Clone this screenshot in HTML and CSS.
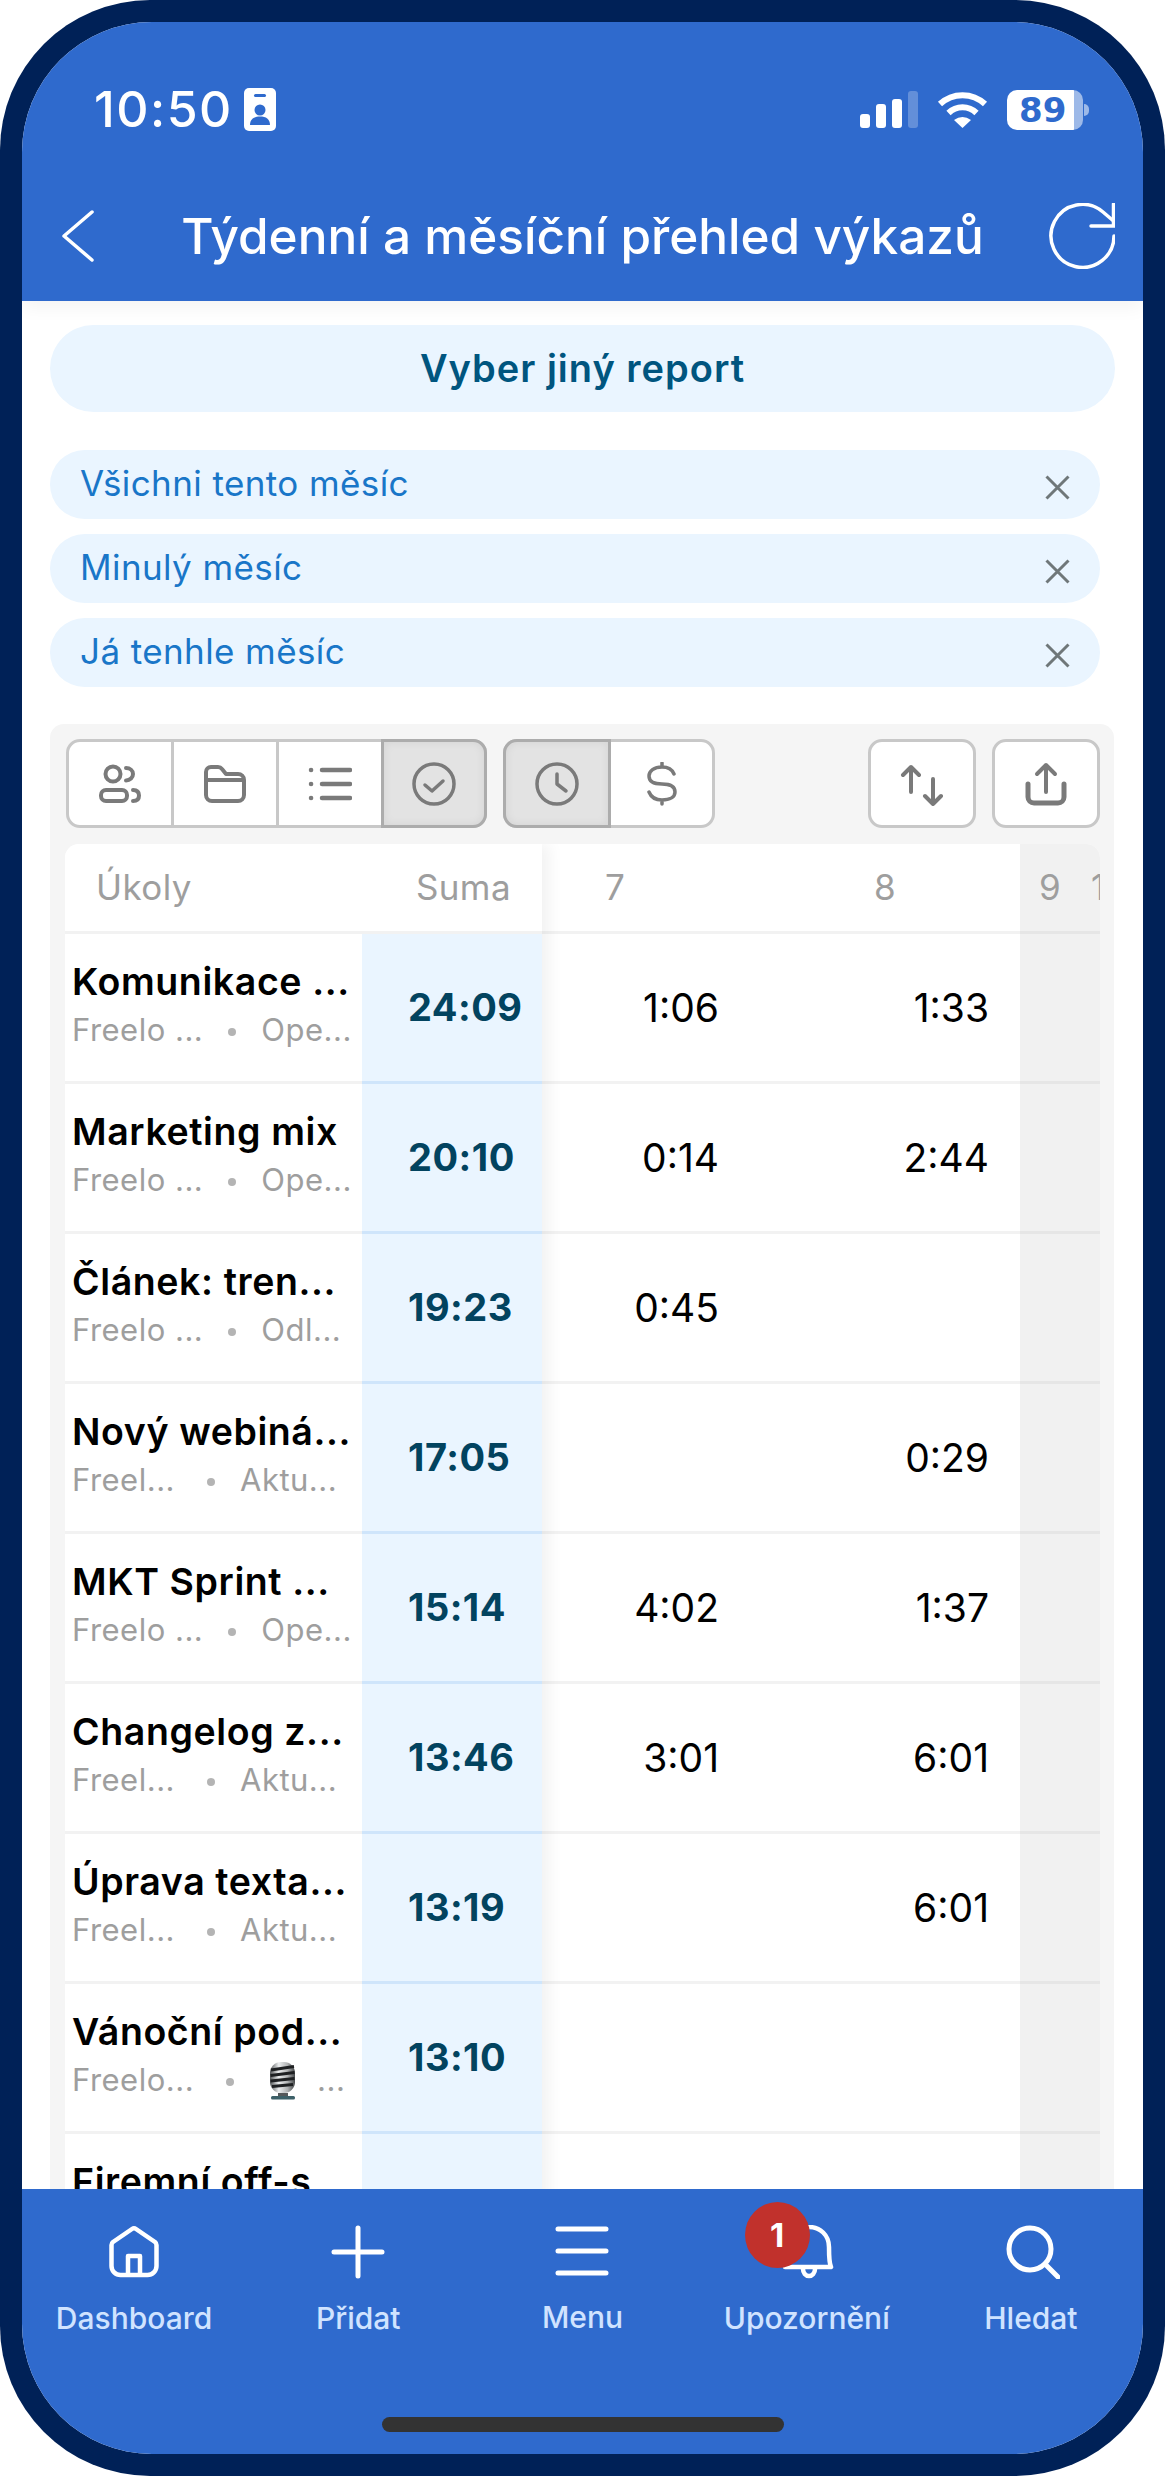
FILE: index.html
```html
<!DOCTYPE html>
<html lang="cs">
<head>
<meta charset="utf-8">
<title>Týdenní a měsíční přehled výkazů</title>
<link rel="stylesheet" href="styles.css">
</head>
<body>
<div class="device">
  <div class="screen">
    <header class="header">
      <div class="status">
        <div class="status-left">
          <span class="time">10:50</span>
          <svg class="ic-card" width="32" height="43" viewBox="0 0 32 43"><rect width="32" height="43" rx="5" fill="#fff"/><rect x="10" y="6" width="12" height="3" rx="1.5" fill="#2f6acd"/><circle cx="16" cy="22" r="5.5" fill="#2f6acd"/><path d="M6 37c0-6 4-8.500 10-8.500s10 2.500 10 8.500z" fill="#2f6acd"/></svg>
        </div>
        <div class="status-right">
          <svg width="58" height="37" viewBox="0 0 58 37"><rect y="23" width="10" height="14" rx="3" fill="#fff"/><rect x="16" y="13" width="10" height="24" rx="3" fill="#fff"/><rect x="32" y="8" width="10" height="29" rx="3" fill="#fff"/><rect x="48" width="10" height="37" rx="3" fill="#fff" fill-opacity=".25"/></svg>
          <svg width="51" height="37" viewBox="0 0 51 37" fill="none"><path d="M3 13A33 33 0 0 1 48 13" stroke="#fff" stroke-width="6"/><path d="M11.500 22A20 20 0 0 1 39.500 22" stroke="#fff" stroke-width="6"/><path d="M17 29Q25.500 23 34 29L25.500 37Z" fill="#fff"/></svg>
          <div class="battery"><span class="battery-level">89</span><span class="battery-nub"></span></div>
        </div>
      </div>
      <nav class="nav">
        <svg class="ic-back" width="32" height="52" viewBox="0 0 32 52" fill="none"><path d="M30 2 2 26l28 24" stroke="#fff" stroke-width="3.500" stroke-linecap="round" stroke-linejoin="round"/></svg>
        <h1 class="title">Týdenní a měsíční přehled výkazů</h1>
        <svg class="ic-refresh" width="66" height="66" viewBox="0 0 66 66" fill="none"><path d="M65 33A31.500 31.500 0 1 1 54 9L64.500 18" stroke="#fff" stroke-width="3.500" stroke-linecap="round"/><path d="M64.500 1V23H42" stroke="#fff" stroke-width="3.500" stroke-linecap="round"/></svg>
      </nav>
    </header>

    <main class="content">
      <button class="report-btn">Vyber jiný report</button>
      <ul class="chips">
        <li class="chip"><span>Všichni tento měsíc</span><svg width="25" height="25" viewBox="0 0 25 25"><path d="M1.500 1.500l22 22M23.500 1.500l-22 22" stroke="#6f7779" stroke-width="3"/></svg></li>
        <li class="chip"><span>Minulý měsíc</span><svg width="25" height="25" viewBox="0 0 25 25"><path d="M1.500 1.500l22 22M23.500 1.500l-22 22" stroke="#6f7779" stroke-width="3"/></svg></li>
        <li class="chip"><span>Já tenhle měsíc</span><svg width="25" height="25" viewBox="0 0 25 25"><path d="M1.500 1.500l22 22M23.500 1.500l-22 22" stroke="#6f7779" stroke-width="3"/></svg></li>
      </ul>

      <section class="panel">
        <div class="toolbar">
          <div class="seg">
            <div class="seg-item"><svg width="44" height="40" viewBox="0 0 44 40" fill="none" stroke="#7a7a7a" stroke-width="4" stroke-linecap="round"><circle cx="15" cy="10" r="7.500"/><rect x="3" y="26" width="26" height="11" rx="5"/><path d="M28 4c4 0 7 2.500 7 6s-3 6.500-7 6.500M35 26c4 0 6 2 6 5.500s-2 5.500-6 5.500"/></svg></div>
            <div class="seg-item"><svg width="44" height="40" viewBox="0 0 44 40" fill="none" stroke="#7a7a7a" stroke-width="4" stroke-linejoin="round"><path d="M3 31V8a5 5 0 0 1 5-5h7a5 5 0 0 1 4 2l4 5h12a6 6 0 0 1 6 6v15a6 6 0 0 1-6 6H9a6 6 0 0 1-6-6zM3 16h38"/></svg></div>
            <div class="seg-item"><svg width="44" height="36" viewBox="0 0 44 36" fill="none" stroke="#7a7a7a" stroke-width="4.500" stroke-linecap="round"><path d="M3 4h.1M3 18h.1M3 32h.1M14 4h28M14 18h28M14 32h28"/></svg></div>
            <div class="seg-item seg-active seg-end"><svg width="44" height="44" viewBox="0 0 44 44" fill="none" stroke="#7a7a7a" stroke-width="3.500" stroke-linecap="round" stroke-linejoin="round"><circle cx="22" cy="22" r="20"/><path d="M13 23l7 6 11-10"/></svg></div>
          </div>
          <div class="seg">
            <div class="seg-item seg-active seg-start"><svg width="44" height="44" viewBox="0 0 44 44" fill="none" stroke="#7a7a7a" stroke-width="3.500" stroke-linecap="round" stroke-linejoin="round"><circle cx="22" cy="22" r="20"/><path d="M22 12v10l9 7"/></svg></div>
            <div class="seg-item"><svg width="44" height="44" viewBox="0 0 44 44" fill="none" stroke="#7a7a7a" stroke-width="3.500" stroke-linecap="round"><path d="M34 12c-2-5-6-7-12-7-8 0-13 4-13 9 0 6 5 8 13 8s13 2 13 8c0 5-5 8-13 8-7 0-11-3-13-8M22 1v4M22 38v4"/></svg></div>
          </div>
          <div class="tool-spacer"></div>
          <div class="tool-btn"><svg width="44" height="44" viewBox="0 0 44 44" fill="none" stroke="#7a7a7a" stroke-width="4" stroke-linecap="round" stroke-linejoin="round"><path d="M11 30V5M3 13l8-8 8 8M33 17v25M25 34l8 8 8-8"/></svg></div>
          <div class="tool-btn"><svg width="44" height="44" viewBox="0 0 44 44" fill="none" stroke="#7a7a7a" stroke-width="4" stroke-linecap="round" stroke-linejoin="round"><path d="M22 30V3M13 12l9-9 9 9"/><path d="M4 22v13a6 6 0 0 0 6 6h24a6 6 0 0 0 6-6V22" stroke-width="5"/></svg></div>
        </div>

        <div class="table">
          <div class="frozen">
            <div class="f-row f-head"><div class="head-task">Úkoly</div><div class="head-sum">Suma</div></div>
            <div class="f-row"><div class="task"><div class="task-name">Komunikace ...</div><div class="task-sub"><span>Freelo ...</span><i class="dot"></i><span>Ope...</span></div></div><div class="sum">24:09</div></div>
            <div class="f-row"><div class="task"><div class="task-name">Marketing mix</div><div class="task-sub"><span>Freelo ...</span><i class="dot"></i><span>Ope...</span></div></div><div class="sum">20:10</div></div>
            <div class="f-row"><div class="task"><div class="task-name">Článek: tren...</div><div class="task-sub"><span>Freelo ...</span><i class="dot"></i><span>Odl...</span></div></div><div class="sum">19:23</div></div>
            <div class="f-row"><div class="task"><div class="task-name">Nový webiná...</div><div class="task-sub"><span class="name-short">Freel...</span><i class="dot"></i><span>Aktu...</span></div></div><div class="sum">17:05</div></div>
            <div class="f-row"><div class="task"><div class="task-name">MKT Sprint ...</div><div class="task-sub"><span>Freelo ...</span><i class="dot"></i><span>Ope...</span></div></div><div class="sum">15:14</div></div>
            <div class="f-row"><div class="task"><div class="task-name">Changelog z...</div><div class="task-sub"><span class="name-short">Freel...</span><i class="dot"></i><span>Aktu...</span></div></div><div class="sum">13:46</div></div>
            <div class="f-row"><div class="task"><div class="task-name">Úprava texta...</div><div class="task-sub"><span class="name-short">Freel...</span><i class="dot"></i><span>Aktu...</span></div></div><div class="sum">13:19</div></div>
            <div class="f-row"><div class="task"><div class="task-name">Vánoční pod...</div><div class="task-sub"><span class="name-short">Freelo...</span><i class="dot"></i><svg class="mic" width="27" height="38" viewBox="0 0 27 38" role="img" aria-label="🎙"><defs><linearGradient id="micMetal" x1="0" x2="1" y1="0" y2="0"><stop offset="0" stop-color="#55585a"/><stop offset=".35" stop-color="#eceeef"/><stop offset=".7" stop-color="#b0b2b3"/><stop offset="1" stop-color="#45484a"/></linearGradient></defs><rect x="1" y="0" width="25" height="31" rx="11" fill="url(#micMetal)"/><path d="M2 8 25 4.500M1.500 13.500 25.500 10.500M1.500 19 25.500 16.500M3 24.500 24 22.500" stroke="#1e2022" stroke-width="3"/><path d="M9 31h10v3H9z" fill="#55585a"/><rect x="2" y="34" width="24" height="3.500" rx="1.500" fill="#3d6068"/></svg><span class="sub-more">...</span></div></div><div class="sum">13:10</div></div>
            <div class="f-row"><div class="task"><div class="task-name">Firemní off-s...</div></div><div class="sum"></div></div>
          </div>
          <div class="days">
            <div class="d-row d-head"><div class="col-a">7</div><div class="col-b">8</div><div class="col-c">9</div><div class="col-c">10</div></div>
            <div class="d-row"><div class="col-a">1:06</div><div class="col-b">1:33</div><div class="col-c"></div><div class="col-c"></div></div>
            <div class="d-row"><div class="col-a">0:14</div><div class="col-b">2:44</div><div class="col-c"></div><div class="col-c"></div></div>
            <div class="d-row"><div class="col-a">0:45</div><div class="col-b"></div><div class="col-c"></div><div class="col-c"></div></div>
            <div class="d-row"><div class="col-a"></div><div class="col-b">0:29</div><div class="col-c"></div><div class="col-c"></div></div>
            <div class="d-row"><div class="col-a">4:02</div><div class="col-b">1:37</div><div class="col-c"></div><div class="col-c"></div></div>
            <div class="d-row"><div class="col-a">3:01</div><div class="col-b">6:01</div><div class="col-c"></div><div class="col-c"></div></div>
            <div class="d-row"><div class="col-a"></div><div class="col-b">6:01</div><div class="col-c"></div><div class="col-c"></div></div>
            <div class="d-row"><div class="col-a"></div><div class="col-b"></div><div class="col-c"></div><div class="col-c"></div></div>
            <div class="d-row"><div class="col-a"></div><div class="col-b"></div><div class="col-c"></div><div class="col-c"></div></div>
          </div>
        </div>
      </section>
    </main>

    <footer class="tabbar">
      <div class="tabs">
        <div class="tab"><div class="tab-icon"><svg width="50" height="52" viewBox="0 0 50 52" fill="none" stroke="#fff" stroke-width="4.500" stroke-linejoin="round"><path d="M2.500 19a4 4 0 0 1 1.500-3L23 3a3.500 3.500 0 0 1 4 0l19 13a4 4 0 0 1 1.500 3v21a9 9 0 0 1-9 9h-27a9 9 0 0 1-9-9z"/><path d="M19 49V30h12v19"/></svg></div><span class="tab-label">Dashboard</span></div>
        <div class="tab"><div class="tab-icon"><svg width="54" height="54" viewBox="0 0 54 54" fill="none" stroke="#fff" stroke-width="5" stroke-linecap="round"><path d="M27 3v48M3 27h48"/></svg></div><span class="tab-label">Přidat</span></div>
        <div class="tab"><div class="tab-icon"><svg width="54" height="54" viewBox="0 0 54 54" fill="none" stroke="#fff" stroke-width="5" stroke-linecap="round"><path d="M3 4h48M3 26h48M3 48h48"/></svg></div><span class="tab-label tab-label-up">Menu</span></div>
        <div class="tab"><div class="tab-icon bell"><svg width="54" height="54" viewBox="0 0 54 54" fill="none" stroke="#fff" stroke-width="4.500" stroke-linejoin="round"><path d="M7 42c4-4 4-11 4-20C11 10 20 2 31 2s20 8 20 20c0 9 0 16 2 20z" transform="translate(-2 0)"/><path d="M23 44a6 7 0 0 0 12 0"/></svg><span class="badge">1</span></div><span class="tab-label">Upozornění</span></div>
        <div class="tab"><div class="tab-icon tab-icon-search"><svg width="54" height="54" viewBox="0 0 54 54" fill="none" stroke="#fff" stroke-width="5" stroke-linecap="round"><circle cx="24" cy="24" r="21"/><path d="M39 39l13 13"/></svg></div><span class="tab-label">Hledat</span></div>
      </div>
      <div class="home-bar"></div>
    </footer>
  </div>
</div>
</body>
</html>
```
FILE: styles.css
```css
* { box-sizing: border-box; }
html, body { margin: 0; padding: 0; background: #fff; }
body { font-family: Inter, "Noto Sans", sans-serif; width: 1165px; height: 2476px; overflow: hidden; }

.device { width: 1165px; height: 2476px; padding: 22px; background: #002157; border-radius: 150px; }
.screen { width: 100%; height: 100%; background: #fff; border-radius: 130px; overflow: hidden; display: flex; flex-direction: column; }

.header { flex: none; height: 279px; padding-top: 66px; background: #2f6acd; color: #fff; position: relative; z-index: 2; box-shadow: 0 6px 18px rgba(0,0,0,.05); }
.status { display: flex; justify-content: space-between; align-items: center; height: 43px; padding: 0 60px 0 72px; }
.status-left { display: flex; align-items: center; gap: 11px; }
.time { font-size: 50px; font-weight: 500; line-height: 43px; letter-spacing: 1.5px; }
.status-right { display: flex; align-items: center; gap: 19px; }
.battery { width: 76px; height: 40px; position: relative; border-radius: 10px; background: linear-gradient(90deg, #fff 0, #fff 67px, #9db9e8 67px, #9db9e8 76px); display: flex; align-items: center; padding-left: 12px; }
.battery-level { font-family: "DejaVu Sans", sans-serif; font-weight: 700; font-size: 34px; line-height: 40px; color: #2f6acd; }
.battery-nub { position: absolute; right: -6px; top: 14px; width: 5px; height: 12px; background: #9db9e8; border-radius: 0 6px 6px 0; }

.nav { display: grid; grid-template-columns: 1fr auto 1fr; align-items: center; height: 66px; margin-top: 72px; padding: 0 28px; }
.ic-back { margin-left: 12px; }
.ic-refresh { justify-self: end; }
.title { margin: 0; font-size: 49.5px; font-weight: 500; line-height: 66px; white-space: nowrap; }

.content { flex: 1; min-height: 0; overflow: hidden; padding: 24px 28px 0; }
.report-btn { display: block; width: 1065px; height: 87px; padding: 0 0 2px; border: 0; border-radius: 44px; background: #eaf5ff; color: #00557f; font-family: inherit; font-size: 38px; letter-spacing: 1px; font-weight: 600; }
.chips { list-style: none; margin: 38px 0 0; padding: 0; width: 1050px; display: flex; flex-direction: column; gap: 15px; }
.chip { height: 69px; border-radius: 35px; background: #eaf5ff; color: #1976c8; font-size: 35px; letter-spacing: .4px; display: flex; align-items: center; justify-content: space-between; padding: 0 30px 3px 30px; }
.chip svg { margin-top: 9px; }

.panel { width: 1064px; margin-top: 37px; padding: 15px 14px 0 16px; background: #f5f5f5; border-radius: 14px 14px 0 0; height: 1500px; }
.toolbar { display: flex; gap: 16px; height: 89px; }
.tool-spacer { flex: 1; }
.seg { display: flex; border: 3px solid #c8c8c8; border-radius: 14px; background: #fff; }
.seg-item { width: 105px; display: flex; align-items: center; justify-content: center; border-left: 3px solid #c8c8c8; }
.seg-item:first-child { border-left: 0; width: 102px; }
.seg-active { background: #e3e3e3; margin: -3px; border: 3px solid #acacac; box-shadow: inset 0 0 10px rgba(0,0,0,.07); }
.seg-item.seg-end { margin-left: 0; width: 106px; border-radius: 0 14px 14px 0; }
.seg-item.seg-start { margin-right: 0; width: 108px; border: 3px solid #acacac; border-radius: 14px 0 0 14px; }
.seg-start + .seg-item { border-left: 0; width: 101px; }
.tool-btn { width: 108px; height: 89px; background: #fff; border: 3px solid #c8c8c8; border-radius: 14px; display: flex; align-items: center; justify-content: center; }

.table { display: flex; width: 1035px; margin: 16px 0 0 -1px; overflow: hidden; border-radius: 14px 14px 0 0; background: #fff; }
.frozen { flex: none; width: 477px; position: relative; z-index: 1; background: #fff; box-shadow: 8px 0 14px rgba(0,0,0,.05); }
.f-row { display: flex; height: 150px; }
.f-head { height: 90px; border-bottom: 3px solid #f2f2f2; font-size: 35px; letter-spacing: .4px; color: #9e9e9e; align-items: center; justify-content: space-between; padding: 0 31px 2px 31px; }
.task { flex: none; width: 297px; padding: 26px 0 0 7px; border-bottom: 3px solid #f2f2f2; white-space: nowrap; }
.task-name { font-size: 37.5px; letter-spacing: .6px; font-weight: 600; line-height: 44px; color: #000; }
.task-sub { display: flex; align-items: center; margin-top: 8px; font-size: 31px; letter-spacing: .5px; line-height: 36px; color: #9e9e9e; }
.dot { width: 8px; height: 8px; margin: 4px 25px 0; border-radius: 50%; background: #b4b4b4; }
.name-short { margin-right: 7px; }
.mic { margin: 0 0 -2px 10px; flex: none; }
.sub-more { margin-left: 21px; }
.sum { flex: none; width: 180px; padding: 0 0 2px 46px; display: flex; align-items: center; background: #eaf5ff; border-bottom: 3px solid #cfe5fb; font-size: 38px; letter-spacing: .5px; font-weight: 700; color: #02435f; }

.days { flex: none; width: 558px; }
.d-row { display: grid; grid-template-columns: 208px 270px 52px 28px; height: 150px; font-size: 39px; color: #000; }
.d-row > div { display: flex; align-items: center; border-bottom: 3px solid #f2f2f2; overflow: hidden; }
.col-a { justify-content: flex-end; padding-right: 31px; }
.col-b { justify-content: flex-end; padding-right: 31px; }
.d-row > .col-c { background: #f1f1f1; border-bottom-color: #e6e6e6; padding-left: 19px; }
.d-head { height: 90px; font-size: 35px; color: #9e9e9e; }
.d-head > .col-a { justify-content: flex-start; padding: 0 0 2px 63px; }
.d-head > .col-b { justify-content: flex-start; padding: 0 0 2px 124px; }
.d-head > .col-c { padding-bottom: 2px; }

.tabbar { flex: none; height: 265px; padding: 36px 0 22px; background: #2f6acd; position: relative; z-index: 2; display: flex; flex-direction: column; }
.tabs { display: grid; grid-template-columns: repeat(5, 1fr); }
.tab { display: flex; flex-direction: column; align-items: center; }
.tab-icon { height: 54px; display: flex; align-items: center; position: relative; }
.tab-icon-search { margin-left: 4px; }
.tab-label { margin-top: 22px; font-size: 30px; font-weight: 500; line-height: 34px; color: #d0e3ff; white-space: nowrap; }
.tab-label-up { margin-top: 21px; }
.badge { position: absolute; left: -35px; top: -23px; width: 65px; height: 66px; border-radius: 50%; background: #c1312c; color: #fff; font-size: 33px; font-weight: 700; display: flex; align-items: center; justify-content: center; }
.home-bar { width: 402px; height: 15px; margin: auto auto 0; border-radius: 8px; background: #333; }
```
